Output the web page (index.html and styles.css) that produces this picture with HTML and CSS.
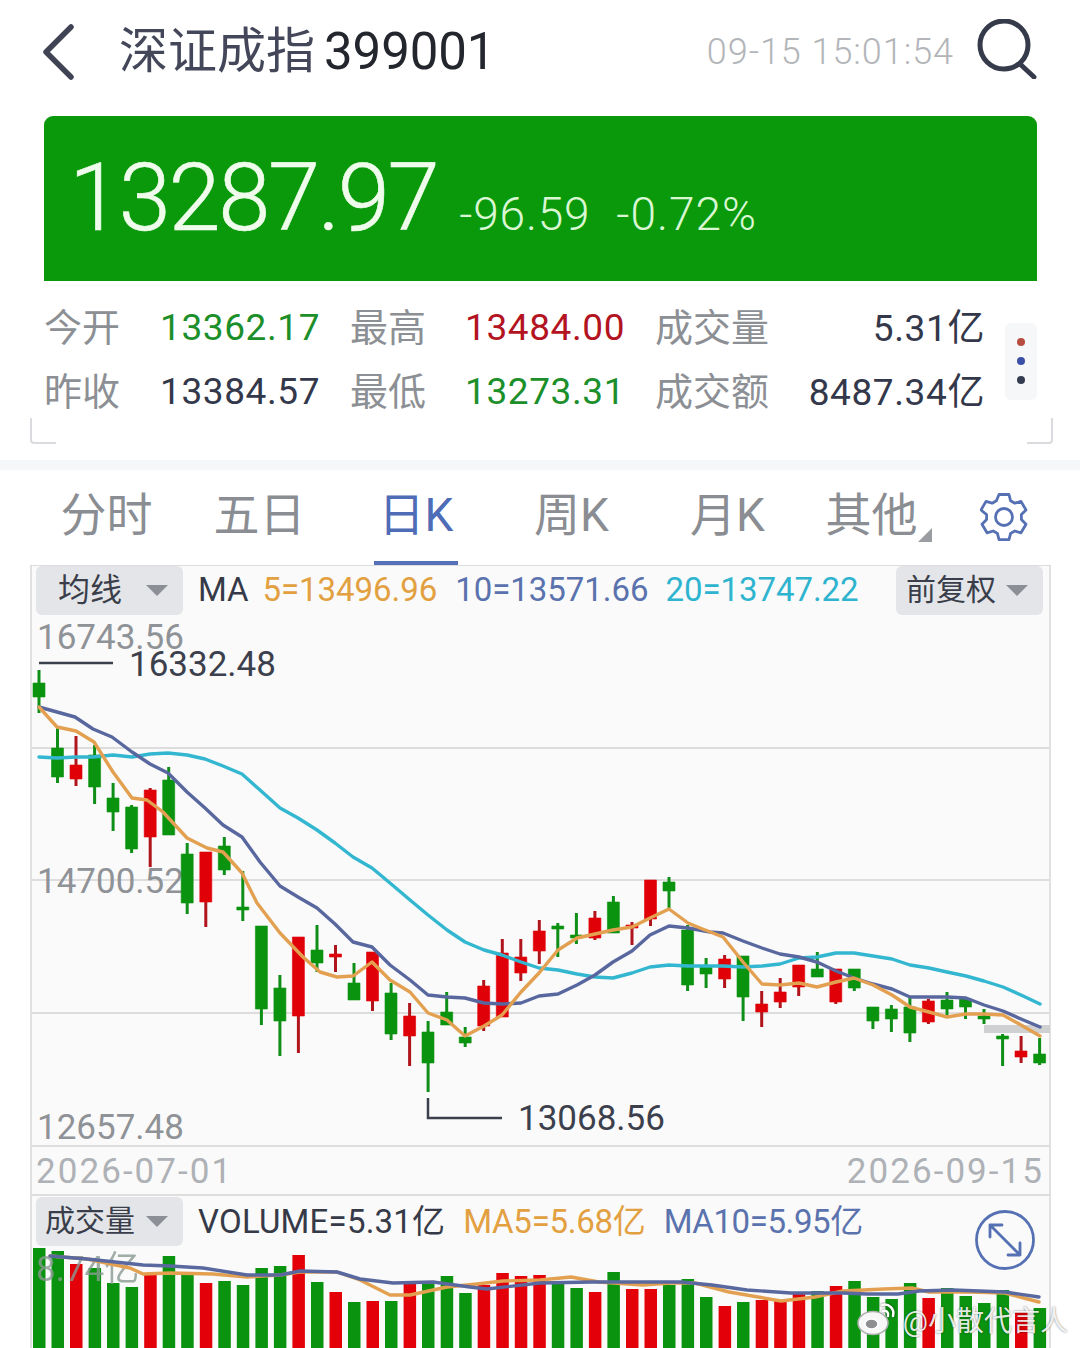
FILE: index.html
```html
<!DOCTYPE html>
<html lang="zh">
<head>
<meta charset="utf-8">
<title>深证成指 399001</title>
<link rel="stylesheet" href="styles.css">
</head>
<body>
<div class="page">
  <header class="topbar">
    <svg class="back" viewBox="0 0 34 56" width="34" height="56"><path d="M29 3 4 28l25 25"/></svg>
    <h1 class="title"><span class="title-name">深证成指</span><span class="title-code">399001</span></h1>
    <span class="clock">09-15 15:01:54</span>
    <svg class="search" viewBox="0 0 60 60" width="60" height="60"><circle cx="27" cy="26" r="24"/><path d="m43 45 14 13"/></svg>
  </header>

  <section class="quote">
    <span class="quote-price">13287.97</span>
    <span class="quote-change">-96.59</span>
    <span class="quote-pct">-0.72%</span>
  </section>

  <section class="stats">
    <div class="stats-row">
      <div class="stats-grid">
        <span class="lbl">今开</span><span class="val up">13362.17</span>
        <span class="lbl">最高</span><span class="val down">13484.00</span>
        <span class="lbl">成交量</span><span class="val right">5.31亿</span>
        <span class="lbl">昨收</span><span class="val">13384.57</span>
        <span class="lbl">最低</span><span class="val up">13273.31</span>
        <span class="lbl">成交额</span><span class="val right">8487.34亿</span>
      </div>
      <div class="dots"><i class="dot dot-r"></i><i class="dot dot-b"></i><i class="dot dot-k"></i></div>
    </div>
    <div class="corners"><i class="corner corner-l"></i><i class="corner corner-r"></i></div>
  </section>

  <div class="divider"></div>

  <nav class="tabs">
    <a class="tab"><span>分时</span></a>
    <a class="tab"><span>五日</span></a>
    <a class="tab tab-k1 active"><span>日K</span></a>
    <a class="tab tab-k2"><span>周K</span></a>
    <a class="tab tab-k3"><span>月K</span></a>
    <a class="tab tab-more"><span>其他</span><i class="corner-tri"></i></a>
    <svg class="gear" viewBox="0 0 48 50" width="48" height="50"><path d="M19 2.5h10l1.6 6.3 4.2 2.4 6.2-1.8 5 8.6-4.6 4.6v5l4.600 4.600-5 8.600-6.200-1.800-4.200 2.400-1.600 6.300H19l-1.600-6.300-4.200-2.400-6.200 1.800-5-8.600 4.600-4.600v-5L1 18l5-8.600 6.200 1.800 4.200-2.400z"/><circle cx="24" cy="25" r="8.500"/></svg>
  </nav>

  <section class="chart">
    <div class="toolbar toolbar-main">
      <span class="pill pill-ma"><b class="pill-text">均线</b><i class="tri"></i></span>
      <span class="legend legend-ma ink">MA</span>
      <span class="legend orange">5=13496.96</span>
      <span class="legend legend-10 blue">10=13571.66</span>
      <span class="legend cyan">20=13747.22</span>
      <span class="pill pill-adj"><b class="pill-text">前复权</b><i class="tri"></i></span>
    </div>

    <svg class="plot" viewBox="30 615 1021 530" width="1021" height="530">
      <path class="grid" d="M32 748H1049M32 880H1049M32 1013H1049"/>
      <text class="axis" x="37" y="649">16743.56</text>
      <text class="axis" x="37" y="893">14700.52</text>
      <path class="leader" d="M39 663H113M428 1098V1118H502"/>
      <text class="mark" x="129" y="676">16332.48</text>
      <text class="mark" x="518" y="1130">13068.56</text>
      <rect class="last" x="984" y="1025" width="66" height="8"/>
      <path class="wick-g" d="M39 670V713M57.500 728V783M94.600 745V804M113.100 783V831M131.600 805V853M168.700 767V835M187.200 843V914M224.300 837V875M242.800 871V921M261.400 926V1025M279.900 975V1056M317 925V972M354 963V1000M391.100 983V1040M428.100 1021V1092M446.700 992V1025M465.200 1027V1047M557.800 923V957M576.400 913V944M613.400 896V933M669 877V908M687.600 925V991M706.100 958V988M743.100 956V1021M817.300 952V977M854.300 969V991M872.900 1007V1029M891.400 1005V1032M909.900 998V1042M947 992V1016M965.500 998V1019M984 1009V1024M1002.600 1034V1066M1039.600 1038V1065"/>
      <path class="wick-r" d="M76 736V786M150.200 788V867M205.800 852V927M298.400 937V1053M335.500 945V972M372.500 952V1011M409.600 1003V1066M483.700 980V1031M502.300 939V1017M520.800 939V981M539.300 920V964M594.900 911V940M632 922V945M650.500 880V926M724.600 955V988M761.700 991V1027M780.200 978V1008M798.700 965V996M835.800 969V1004M928.400 999V1024M1021.100 1036V1063"/>
      <path class="body-g" d="M33 683h12V697h-12zM51.500 748h12V777h-12zM88.600 755h12V787h-12zM107 798h12V812h-12zM125.600 807h12V849h-12zM162.700 780h12V835h-12zM181.200 854h12V903h-12zM218.300 846h12V870h-12zM236.800 907h12V910h-12zM255.400 926h12V1009h-12zM273.900 988h12V1021h-12zM311 950h12V963h-12zM348 983h12V1000h-12zM385 993h12V1034h-12zM422 1032h12V1063h-12zM440.700 1012h12V1025h-12zM459.200 1037h12V1043h-12zM551.800 926h12V929h-12zM570.400 935h12V938h-12zM607.400 902h12V933h-12zM663 882h12V891h-12zM681.600 930h12V985h-12zM700 967h12V974h-12zM737 956h12V997h-12zM811.300 969h12V977h-12zM848.300 969h12V988h-12zM866.900 1007h12V1021h-12zM885.400 1009h12V1019h-12zM903.900 1007h12V1033h-12zM941 1000h12V1009h-12zM959.500 999h12V1007h-12zM978 1016h12V1019h-12zM996.600 1036h12V1039h-12zM1033.600 1054h12V1063h-12z"/>
      <path class="body-r" d="M70 765h12V779h-12zM144.200 790h12V837h-12zM199.800 852h12V902h-12zM292.400 937h12V1016h-12zM329.500 954h12V957h-12zM366.500 952h12V1001h-12zM403.600 1016h12V1036h-12zM477.700 986h12V1026h-12zM496.300 953h12V1017h-12zM514.800 957h12V973h-12zM533.300 931h12V951h-12zM588.900 918h12V938h-12zM626 925h12V928h-12zM644.500 880h12V919h-12zM718.600 959h12V979h-12zM755.700 1004h12V1012h-12zM774.200 992h12V1002h-12zM792.700 965h12V987h-12zM829.800 969h12V1002h-12zM922.400 1001h12V1022h-12zM1015 1051h12V1057h-12z"/>
      <polyline class="ma20" points="39,757 57,758 76,757 93,757 113,755 132,757 150,754 168,753 187,755 205,759 223,766 242,774 260,790 280,808 298,818 317,830 335,843 353,857 372,868 390,883 410,900 428,915 447,930 465,942 484,950 502,955 521,962 539,968 558,970 577,974 595,977 613,978 632,973 650,967 669,965 688,966 706,966 723,966 743,967 762,966 780,964 799,958 817,957 836,953 854,953 873,956 892,959 910,965 929,968 947,972 966,976 984,981 1003,987 1021,995 1040,1004"/>
      <polyline class="ma10" points="39,707 57,712 75,717 93,729 112,737 132,752 150,764 168,773 187,792 205,808 223,825 242,837 260,862 280,886 298,897 317,908 335,924 353,942 372,947 390,965 410,980 428,995 447,997 465,998 484,1003 502,1004 521,1003 539,996 558,994 577,985 595,975 613,962 632,951 650,935 669,926 688,928 710,932 723,933 743,941 762,948 780,954 799,957 817,962 836,971 854,978 873,984 892,989 910,997 929,997 947,997 966,998 984,1005 1003,1011 1021,1019 1040,1027"/>
      <polyline class="ma5" points="39,707 57,727 76,731 94,742 113,772 132,798 147,800 163,812 187,838 207,848 223,852 242,873 257,903 280,933 303,957 320,972 337,977 353,976 372,962 390,980 410,992 428,1013 447,1020 465,1036 484,1026 502,1015 521,992 539,973 558,950 577,938 595,934 613,930 632,927 650,918 669,909 688,923 700,928 723,937 743,962 762,984 780,985 799,983 817,987 836,982 854,978 873,985 892,995 910,1007 929,1012 947,1017 966,1014 984,1014 1003,1015 1021,1025 1040,1036"/>
      <text class="axis" x="37" y="1139">12657.48</text>
    </svg>

    <div class="dates"><span>2026-07-01</span><span>2026-09-15</span></div>

    <div class="toolbar toolbar-vol">
      <span class="pill pill-vol"><b class="pill-text">成交量</b><i class="tri"></i></span>
      <span class="legend ink">VOLUME=5.31亿</span>
      <span class="legend orange">MA5=5.68亿</span>
      <span class="legend blue">MA10=5.95亿</span>
    </div>

    <svg class="plot-vol" viewBox="30 1246 1021 102" width="1021" height="102">
      <path class="bar-g" d="M33 1248h12.500V1348h-12.500zM51.500 1251h12.500V1348h-12.500zM88.600 1268h12.500V1348h-12.500zM107 1283h12.500V1348h-12.500zM125.600 1287h12.500V1348h-12.500zM162.700 1256h12.500V1348h-12.500zM181.200 1273h12.500V1348h-12.500zM218.300 1281h12.500V1348h-12.500zM236.800 1285h12.500V1348h-12.500zM255.400 1268h12.500V1348h-12.500zM273.900 1266h12.500V1348h-12.500zM311 1282h12.500V1348h-12.500zM348 1302h12.500V1348h-12.500zM385 1301h12.500V1348h-12.500zM422 1282h12.500V1348h-12.500zM440.700 1276h12.500V1348h-12.500zM459.200 1293h12.500V1348h-12.500zM551.800 1282h12.500V1348h-12.500zM570.400 1288h12.500V1348h-12.500zM607.400 1272h12.500V1348h-12.500zM663 1285h12.500V1348h-12.500zM681.600 1279h12.500V1348h-12.500zM700 1297h12.500V1348h-12.500zM737 1302h12.500V1348h-12.500zM811.300 1291h12.500V1348h-12.500zM848.300 1281h12.500V1348h-12.500zM866.900 1297h12.500V1348h-12.500zM885.400 1299h12.500V1348h-12.500zM903.900 1283h12.500V1348h-12.500zM941 1288h12.500V1348h-12.500zM959.500 1296h12.500V1348h-12.500zM978 1303h12.500V1348h-12.500zM996.600 1290h12.500V1348h-12.500zM1033.600 1308h12.500V1348h-12.500z"/>
      <path class="bar-r" d="M70 1264h12.500V1348h-12.500zM144.200 1275h12.500V1348h-12.500zM199.800 1283h12.500V1348h-12.500zM292.400 1255h12.500V1348h-12.500zM329.500 1292h12.500V1348h-12.500zM366.500 1301h12.500V1348h-12.500zM403.600 1283h12.500V1348h-12.500zM477.700 1285h12.500V1348h-12.500zM496.300 1273h12.500V1348h-12.500zM514.800 1276h12.500V1348h-12.500zM533.300 1275h12.500V1348h-12.500zM588.900 1292h12.500V1348h-12.500zM626 1289h12.500V1348h-12.500zM644.500 1289h12.500V1348h-12.500zM718.600 1306h12.500V1348h-12.500zM755.700 1300h12.500V1348h-12.500zM774.200 1301h12.500V1348h-12.500zM792.700 1294h12.500V1348h-12.500zM829.800 1286h12.500V1348h-12.500zM922.400 1298h12.500V1348h-12.500zM1015 1312h12.500V1348h-12.500z"/>
      <text class="axis-vol" x="36" y="1281">8.74亿</text>
      <polyline class="vol-ma5" points="50,1256 87,1259 130,1268 143,1274 170,1273 213,1274 247,1277 280,1275 300,1272 337,1272 360,1280 390,1295 410,1295 447,1287 477,1284 503,1281 540,1280 571,1277 599,1282 643,1285 671,1283 695,1283 729,1292 781,1301 815,1297 843,1291 884,1289 912,1288 929,1292 970,1292 1005,1293 1039,1302"/>
      <polyline class="vol-ma10" points="50,1256 87,1259 143,1265 170,1266 203,1268 247,1275 280,1275 300,1271 337,1272 360,1279 393,1283 433,1282 470,1287 487,1289 540,1283 592,1282 643,1282 681,1282 712,1285 747,1290 791,1293 843,1293 867,1294 898,1294 919,1291 953,1290 1005,1292 1039,1297"/>
    </svg>

    <svg class="expand" viewBox="0 0 60 60" width="60" height="60"><circle cx="30" cy="30" r="28.500"/><path d="m15 15 30 30M15 27V15h12M45 33v12H33"/></svg>
  </section>

  <div class="watermark">
    <svg class="wb-logo" viewBox="0 0 40 34" width="40" height="34"><path class="wb-arc" d="M25 3c7-2 13 4 11 11M26 9c3.500-.8 6 1.500 5 5"/><ellipse class="wb-eye" cx="16" cy="21" rx="15" ry="11.500"/><ellipse class="wb-pupil" cx="14.500" cy="22" rx="6.500" ry="5"/></svg>
    <span class="wb-text">@小散代言人</span>
  </div>
</div>
</body>
</html>
```
FILE: styles.css
```css
* { box-sizing: border-box; }
html, body { margin: 0; padding: 0; background: #fff; }
body { width: 1080px; height: 1348px; overflow: hidden; font-family: Roboto, "Noto Sans CJK SC", sans-serif; color: #353a48; }
.page { position: relative; width: 1080px; height: 1348px; overflow: hidden; }

/* top bar */
.topbar { display: flex; align-items: center; height: 104px; margin-bottom: 12px; padding-left: 42px; }
.back { flex: none; fill: none; stroke: #3f4354; stroke-width: 5.5; stroke-linecap: round; stroke-linejoin: round; }
.title { display: flex; align-items: center; margin: 0 0 0 43px; font-weight: 400; font-size: 49px; line-height: 60px; }
.title-name { color: #434759; font-weight: 400; }
.title-code { margin-left: 9px; font-size: 51px; color: #24262e; letter-spacing: -.1px; }
.clock { margin-left: auto; font-size: 36px; font-weight: 300; color: #b3b5b9; letter-spacing: .95px; }
.search { flex: none; margin: -6px 43px 0 23px; fill: none; stroke: #363b4b; stroke-width: 5; stroke-linecap: round; }

/* quote */
.quote { display: flex; align-items: baseline; height: 165px; margin: 0 43px 0 44px; padding: 36px 0 0 25px; background: #0a990b; border-radius: 9px 9px 0 0; color: #d9f7d3; }
.quote-price { font-size: 94px; font-weight: 300; line-height: 92px; letter-spacing: -2.400px; color: #effcec; -webkit-text-stroke: .6px #effcec; }
.quote-change { margin-left: 22px; font-size: 46px; font-weight: 300; letter-spacing: .8px; }
.quote-pct { margin-left: 26px; font-size: 46px; font-weight: 300; letter-spacing: 1px; }

/* stats */
.stats { height: 179px; padding-top: 14px; }
.stats-row { display: flex; padding-left: 44px; }
.stats-grid { display: grid; grid-template-columns: 116px 190px 115px 190px 120px 210px; grid-auto-rows: 64px; align-items: center; width: 941px; }
.lbl { padding-bottom: 6px; font-size: 38px; font-weight: 400; color: #8c8f94; }
.val { font-size: 37px; letter-spacing: .6px; color: #33384a; white-space: nowrap; }
.val.up { color: #1c8f2b; }
.val.down { color: #b3141f; }
.val.right { padding-top: 4px; text-align: right; letter-spacing: .6px; line-height: 40px; }
.dots { display: flex; flex-direction: column; align-items: center; gap: 11px; width: 32px; height: 77px; margin: 28px 0 0 20px; padding-top: 15px; background: #f6f7f9; border-radius: 6px; }
.dot { width: 8px; height: 8px; border-radius: 50%; }
.dot-r { background: #b64d40; }
.dot-b { background: #3b4fa6; }
.dot-k { background: #353c50; }
.corners { display: flex; justify-content: space-between; margin: -5px 27px 0 30px; }
.corner { width: 26px; height: 26px; border-bottom: 2px solid #d9dbde; }
.corner-l { border-left: 2px solid #d9dbde; border-bottom-left-radius: 4px; }
.corner-r { border-right: 2px solid #d9dbde; border-bottom-right-radius: 4px; }
.divider { height: 10px; background: #f6f7f9; }

/* tabs */
.tabs { display: grid; grid-template-columns: repeat(6, 153px) 48px; align-items: start; height: 95px; padding-left: 30px; }
.tab { position: relative; display: flex; justify-content: center; padding-top: 15px; font-size: 46px; font-weight: 400; line-height: 60px; color: #8a8d92; }
.tab > span { display: block; height: 80px; padding: 0 5px; }
.tab-k1 { padding-left: 7px; }
.tab-k2 { padding-left: 12px; }
.tab-k3 { padding-left: 18px; }
.tab.active { color: #4f6cb7; }
.tab.active > span { border-bottom: 4px solid #5570b8; }
.corner-tri { position: absolute; left: 123px; top: 58px; width: 0; height: 0; border-style: solid; border-width: 0 0 14px 14px; border-color: transparent transparent #9a9da2 transparent; }
.gear { margin: 22px 0 0 32px; fill: none; stroke: #5670b4; stroke-width: 2.8; stroke-linejoin: round; }

/* chart */
.chart { position: relative; width: 1021px; height: 783px; margin-left: 30px; background: #fafafa; box-shadow: inset 2px 0 #e1e1e1, inset -2px 0 #e1e1e1; }
.toolbar { display: flex; align-items: flex-start; height: 50px; padding-left: 6px; }
.toolbar-main { border-top: 1px solid #dcdcdc; }
.pill { display: flex; align-items: center; justify-content: space-between; width: 147px; height: 49px; background: #e3e5e8; border-radius: 6px; color: #3a3e4a; }
.pill-text { padding-bottom: 8px; font-weight: 400; }
.pill-ma { padding: 0 15px 0 22px; font-size: 32px; margin-right: 15px; }
.pill-adj { margin-left: auto; margin-right: 8px; padding: 0 15px 0 10px; font-size: 30px; }
.pill-vol { padding: 0 15px 0 9px; font-size: 30px; margin-top: 1px; margin-right: 15px; }
.tri { width: 0; height: 0; border-style: solid; border-width: 11px 11px 0; border-color: #8c8f96 transparent transparent; }
.legend { font-size: 33px; line-height: 48px; white-space: nowrap; margin-right: 18px; letter-spacing: -.05px; }
.legend-ma { margin-right: 14px; }
.legend-10 { margin-right: 17px; }
.toolbar-vol .legend { font-size: 33px; margin-right: 18px; line-height: 52px; letter-spacing: .2px; }
.toolbar-vol .orange { letter-spacing: -.25px; }
.toolbar-vol .blue { letter-spacing: -.4px; }
.ink { color: #363a48; }
.orange { color: #e2a041; }
.blue { color: #5a72ad; }
.cyan { color: #2fb4cf; }
.plot, .plot-vol { display: block; }
.plot { overflow: visible; }

.grid { fill: none; stroke: #dddddd; stroke-width: 2; }
.axis { font-size: 35px; fill: #8f9296; font-family: Roboto, sans-serif; }
.mark { font-size: 35px; fill: #3c404c; font-family: Roboto, sans-serif; }
.leader { fill: none; stroke: #3c404c; stroke-width: 2.500; }
.last { fill: #cfd0d2; }
.wick-g { fill: none; stroke: #0f8f18; stroke-width: 3; }
.wick-r { fill: none; stroke: #b0141c; stroke-width: 3; }
.body-g { fill: #0a930f; stroke: #0a930f; stroke-width: .6; }
.body-r { fill: #e00008; stroke: #e00008; stroke-width: .6; }
.ma5, .ma10, .ma20, .vol-ma5, .vol-ma10 { fill: none; stroke-width: 3.400; stroke-linejoin: round; stroke-linecap: round; }
.ma5 { stroke: #e2a050; }
.ma10 { stroke: #59679f; }
.ma20 { stroke: #33b7d0; }
.vol-ma5 { stroke: #e2a050; }
.vol-ma10 { stroke: #59689f; }

.dates { display: flex; align-items: center; justify-content: space-between; height: 51px; padding: 1px 7px 0 6px; border-top: 2px solid #dedede; border-bottom: 2px solid #dedede; font-size: 35px; letter-spacing: 2.050px; color: #aeb1b5; }
.bar-g { fill: #0a930f; }
.bar-r { fill: #e30008; }
.axis-vol { font-size: 35px; fill: #8a9a92; opacity: .8; font-family: Roboto, "Noto Sans CJK SC", sans-serif; }
.expand { position: absolute; right: 16px; top: 645px; fill: none; stroke: #5670b4; stroke-width: 2.800; stroke-linejoin: round; stroke-linecap: round; }

/* watermark */
.watermark { position: absolute; right: 12px; bottom: 9px; display: flex; align-items: center; gap: 6px; }
.wb-logo { flex: none; }
.wb-arc { fill: none; stroke: #fff; stroke-width: 2.500; stroke-linecap: round; filter: drop-shadow(0 0 1px rgba(0,0,0,.6)); }
.wb-eye { fill: #f7f7f7; stroke: #aeb0b0; stroke-width: 1.500; }
.wb-pupil { fill: #8d8f90; stroke: #fff; stroke-width: 1.500; }
.wb-text { font-size: 28px; color: rgba(255,255,255,.88); text-shadow: 0 0 2px rgba(0,0,0,.55); white-space: nowrap; }
```
